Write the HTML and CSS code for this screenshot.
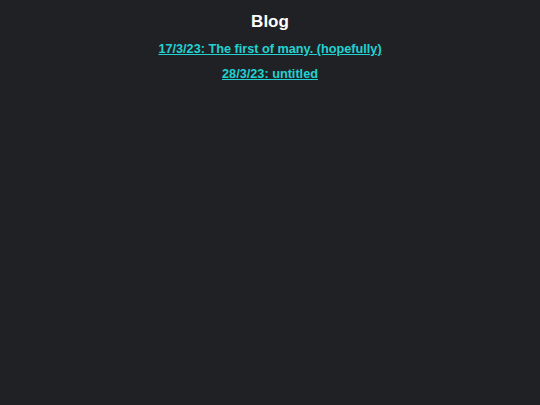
FILE: index.html
```html
<!DOCTYPE html>
<html>
<head>
<meta charset="utf-8">
<link rel="stylesheet" href="styles.css">
</head>
<body>
<main class="page">
<h1 class="title">Blog</h1>
<ul class="posts">
<li class="post"><a class="post-link" href="#">17/3/23: The first of many. (hopefully)</a></li>
<li class="post"><a class="post-link" href="#">28/3/23: untitled</a></li>
</ul>
</main>
</body>
</html>
```
FILE: styles.css
```css
html, body {
  margin: 0;
  padding: 0;
  background: #202124;
  height: 100%;
}
body {
  font-family: "Liberation Sans", Arial, sans-serif;
  color: #ffffff;
}
.page {
  display: flex;
  flex-direction: column;
  align-items: center;
  padding-top: 11px;
}
.title {
  margin: 0;
  font-size: 17px;
  line-height: 22px;
  font-weight: bold;
}
.posts {
  list-style: none;
  margin: 9px 0 0;
  padding: 0;
  display: flex;
  flex-direction: column;
  align-items: center;
  gap: 10px;
}
.post {
  font-size: 12.7px;
  line-height: 15px;
  font-weight: bold;
}
.post-link {
  color: #22d2d2;
  text-decoration: underline;
}
```
